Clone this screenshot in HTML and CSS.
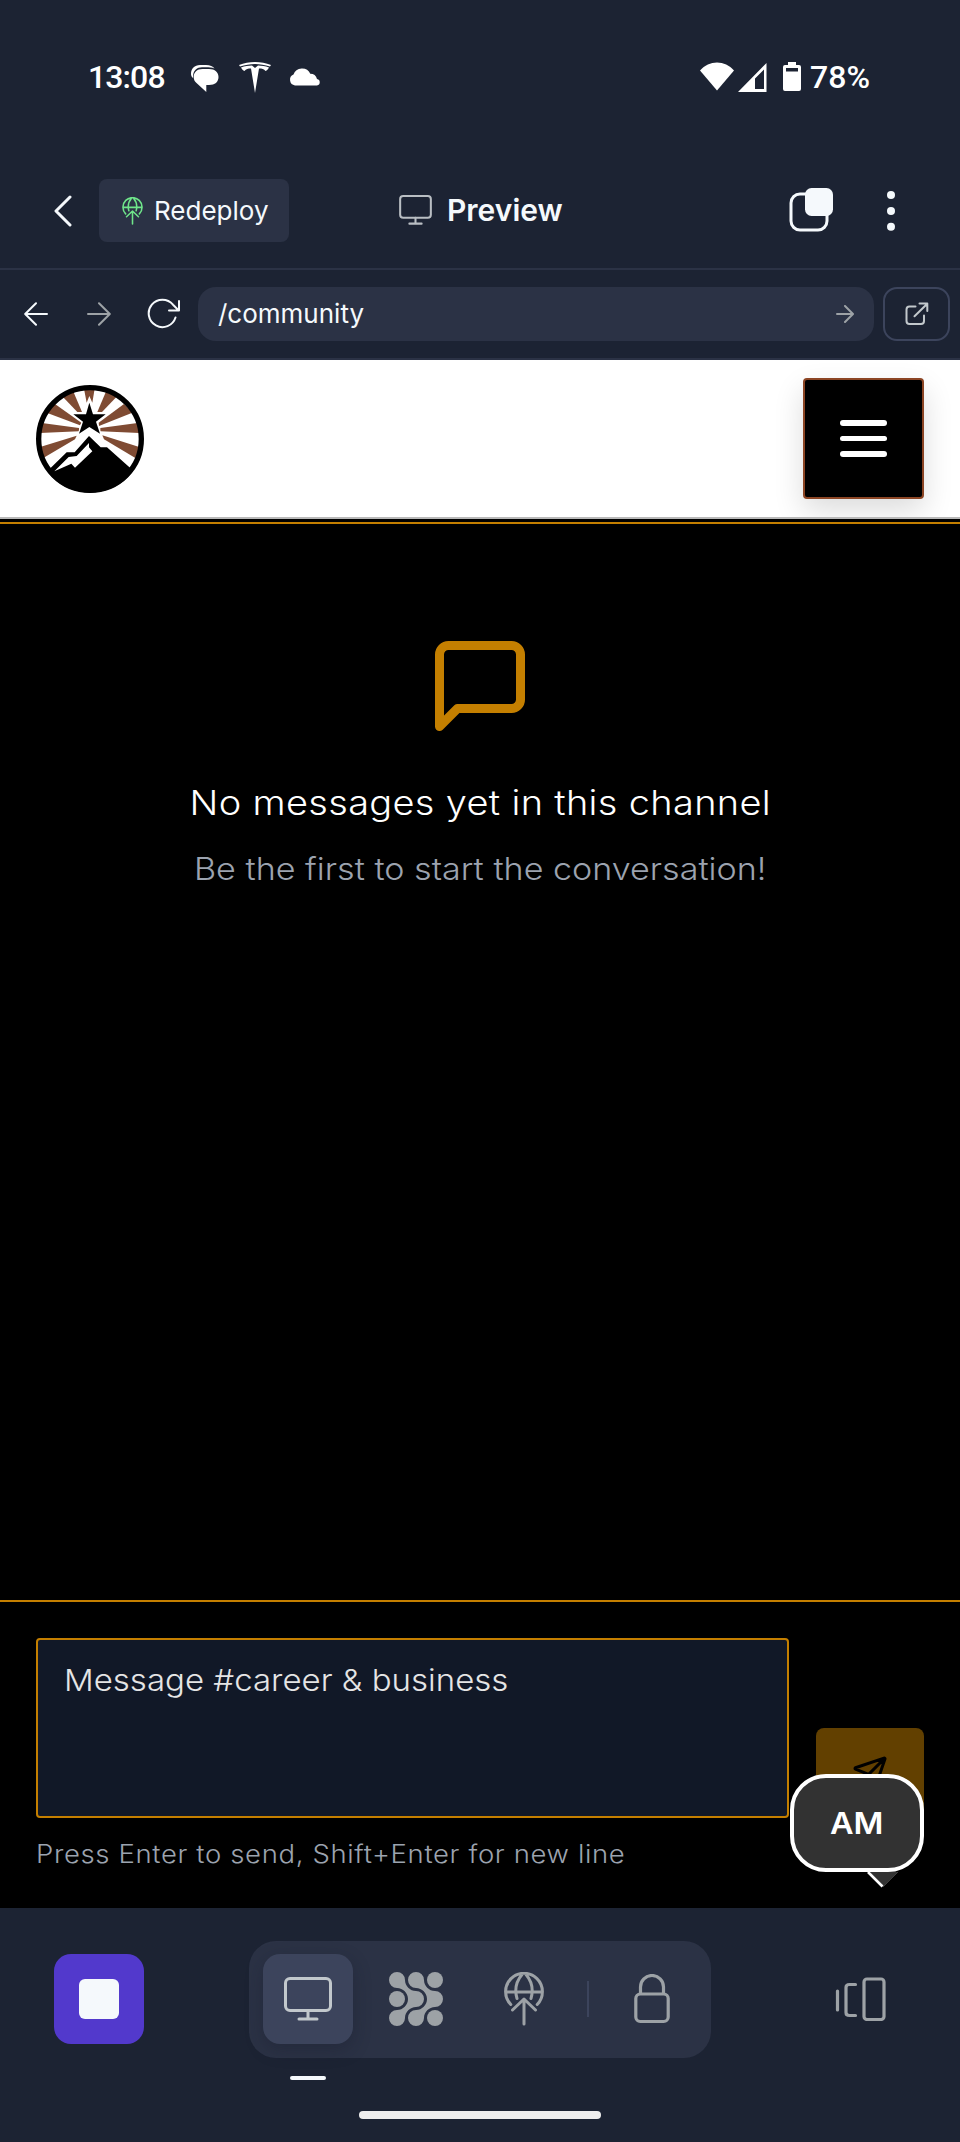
FILE: index.html
```html
<!DOCTYPE html>
<html lang="en">
<head>
<meta charset="utf-8">
<title>Preview</title>
<link rel="stylesheet" href="styles.css">
</head>
<body>
<svg class="defs" width="0" height="0">
  <symbol id="globe-up" viewBox="0 0 40 54">
    <g fill="none" stroke="currentColor" stroke-width="3" stroke-linecap="round" stroke-linejoin="round">
      <path d="M6.8 32.5A18.4 18.4 0 1 1 33.2 32.5M2 20H38M18 2.5C12.5 9 10.500 18 13 26.500M22 2.5C27.500 9 29.500 18 27 26.500M8.500 38L20 27L31.500 38M20 27.500V52"/>
    </g>
  </symbol>
  <symbol id="monitor" viewBox="0 0 48 44">
    <g fill="none" stroke="currentColor" stroke-width="3" stroke-linecap="round">
      <rect x="1.500" y="1.500" width="45" height="32" rx="4.500"/>
      <path d="M24 33.500V42M15 42H33"/>
    </g>
  </symbol>
</svg>
<div class="screen">
  <div class="statusbar">
    <span class="clock">13:08</span>
    <svg class="i-chat" width="28" height="27" viewBox="0 0 28 27"><path fill="#fff" d="M0 9C0 3.500 3.500 0 9 0H15C19 0 22 1.200 23.500 3.500C21 2.500 18 2.300 15 2.300H11C6 2.300 2.500 5.500 2.100 10.500V13C.7 12 0 10.500 0 9Z"/><path fill="#fff" d="M11.500 4H18C24 4 27.500 7.500 27.500 12C27.500 17 24 20 18 20H15.300V27L5.500 18C3.700 16.500 2.700 14.500 2.700 12C2.700 7.500 6 4 11.500 4Z"/></svg>
    <svg class="i-tee" width="32" height="31" viewBox="0 0 32 31"><path fill="#fff" d="M0 3C10-1 22-1 32 3L31 4.500C21 1 11 1 1 4.500ZM2 5.500C6 4 9 3.600 13 3.500L16 6L19 3.500C23 3.600 26 4 30 5.500C29 7.500 28 8.500 26.500 9C25 7 23 6.500 20 6.500L16 31L12 6.500C9 6.500 7 7 5.500 9C4 8.500 3 7.500 2 5.500Z"/></svg>
    <svg class="i-cloud" width="32" height="18" viewBox="0 0 32 18"><path fill="#fff" d="M6 17.500A5.700 5.700 0 0 1 4.500 6.600A9 9 0 0 1 21.300 5.800A7 7 0 0 1 28 11A3.300 3.300 0 0 1 28 17.500Z"/></svg>
    <span class="spacer"></span>
    <svg class="i-wifi" width="34" height="29" viewBox="0 0 34 29"><path fill="#fff" d="M17 28.500L0 8.500C9-2.300 25-2.300 34 8.500Z"/></svg>
    <svg class="i-signal" width="29" height="29" viewBox="0 0 29 29"><path fill="#fff" fill-rule="evenodd" d="M0 29L28.500 0V29ZM17 15.500V26H26V6.500Z"/></svg>
    <svg class="i-battery" width="18" height="29" viewBox="0 0 18 29"><path fill="#fff" fill-rule="evenodd" d="M5 0H13V3H16Q18 3 18 5V27Q18 29 16 29H2Q0 29 0 27V5Q0 3 2 3H5ZM3 6V9.500H15V6Z"/></svg>
    <span class="percent">78%</span>
  </div>

  <div class="toolbar">
    <svg class="i-back" width="18" height="32" viewBox="0 0 18 32"><path fill="none" stroke="#f5f9fc" stroke-width="3" stroke-linecap="round" stroke-linejoin="round" d="M16 2L2 16L16 30"/></svg>
    <div class="redeploy"><svg class="i-globe-small" width="21" height="28"><use href="#globe-up"/></svg><span class="redeploy-label">Redeploy</span></div>
    <svg class="i-monitor-small" width="33" height="30"><use href="#monitor"/></svg>
    <span class="title">Preview</span>
    <svg class="i-tabs" width="46" height="46" viewBox="0 0 46 46"><rect x="2" y="7" width="36" height="36" rx="9" fill="none" stroke="#f5f9fc" stroke-width="3"/><rect x="16" y="1" width="28" height="28" rx="6.500" fill="#f5f9fc"/></svg>
    <svg class="i-more" width="8" height="40" viewBox="0 0 8 40"><g fill="#f5f9fc"><circle cx="4" cy="4" r="4"/><circle cx="4" cy="20" r="4"/><circle cx="4" cy="35.700" r="4"/></g></svg>
  </div>

  <div class="urlbar">
    <svg class="i-prev" width="24" height="24" viewBox="0 0 24 24"><path class="line-bright" d="M23 12H1.500M12 1.200L1.200 12L12 22.800"/></svg>
    <svg class="i-next" width="24" height="24" viewBox="0 0 24 24"><path class="line-dim" d="M1 12H22.500M12 1.200L22.800 12L12 22.800"/></svg>
    <svg class="i-reload" width="34" height="31" viewBox="0 0 34 31"><path class="line-bright" d="M28.500 19.500A13.700 13.700 0 1 1 26 6.700L31.500 12.300M32 3V12.500H22"/></svg>
    <div class="address"><span class="address-text">/community</span><svg class="i-go" width="18" height="18" viewBox="0 0 18 18"><path class="line-dim" d="M1 9H16.500M9 1L17 9L9 17"/></svg></div>
    <div class="open"><svg width="24" height="24" viewBox="0 0 24 24"><path class="line-soft" d="M10.500 4.500H4.500Q1.500 4.500 1.500 7.500V19Q1.500 22 4.500 22H16Q19 22 19 19V13.500M9.500 14.200L22 2M14.500 1.500H22.300V9"/></svg></div>
  </div>

  <div class="site-header">
    <svg class="logo" width="108" height="108" viewBox="108 375 324 324">
      <clipPath id="disc"><circle cx="270" cy="537" r="161"/></clipPath>
      <circle cx="270" cy="537" r="154" fill="#fff"/>
      <g fill="#7f4b33">
        <path d="M252 386H284L277 428L268 408L260 428Z"/>
        <path d="M186 408L218 390L246 456H232Z"/><path d="M352 408L320 390L292 456H306Z"/>
        <path d="M165 432L140 458L240 496L244 488Z"/><path d="M372 432L397 458L297 498L296 488Z"/>
        <path d="M120 488V519L237 514V504Z"/><path d="M418 488V519L301 514V504Z"/>
        <path d="M118 562L130 594L225 538L230 527Z"/><path d="M420 562L406 594L312 538L307 526Z"/>
      </g>
      <circle cx="270" cy="537" r="154" fill="none" stroke="#000" stroke-width="16"/>
      <path fill="#000" stroke="#fff" stroke-width="7" paint-order="stroke" d="M268 428L279 463H317L288 485L300 521L268 501L237 521L249 485L220 463H258Z"/>
      <path clip-path="url(#disc)" fill="#000" d="M148 628L200 577H224L267 528L302 562H321L400 632L432 700H108Z"/>
      <path fill="#fff" d="M163 634L206 591L230 588L267 549V562L277 574L225 623L214 611Z"/>
    </svg>
    <div class="menu"><i></i><i></i><i></i></div>
  </div>

  <div class="channel">
    <svg class="i-message" width="108" height="108" viewBox="0 0 24 24"><path fill="none" stroke="#c47f00" stroke-width="2" stroke-linecap="round" stroke-linejoin="round" d="M21 15a2 2 0 0 1-2 2H7l-4 4V5a2 2 0 0 1 2-2h14a2 2 0 0 1 2 2z"/></svg>
    <div class="empty-title">No messages yet in this channel</div>
    <div class="empty-sub">Be the first to start the conversation!</div>
  </div>

  <div class="composer">
    <div class="composer-row">
      <div class="input"><span class="placeholder">Message #career &amp; business</span></div>
      <div class="send"><svg width="36" height="36" viewBox="0 0 24 24"><path fill="none" stroke="#000" stroke-width="2" stroke-linecap="round" stroke-linejoin="round" d="M14.536 21.686a.5.5 0 0 0 .937-.024l6.500-19a.496.496 0 0 0-.635-.635l-19 6.500a.5.5 0 0 0-.024.937l7.930 3.180a2 2 0 0 1 1.112 1.110zM21.854 2.147l-10.940 10.939"/></svg></div>
    </div>
    <div class="hint"><span class="hint-text">Press Enter to send, Shift+Enter for new line</span></div>
    <div class="bubble"><span class="bubble-text">AM</span>
      <svg class="tail" width="32" height="16" viewBox="0 0 32 16"><path fill="#323232" d="M1 0H31L16 15Z"/><path fill="none" stroke="#fff" stroke-width="2.600" d="M1 0L15.500 14.500"/><path fill="none" stroke="#555" stroke-width=".6" d="M16 15L31 0"/></svg>
    </div>
  </div>

  <div class="dock">
    <div class="stop"><i></i></div>
    <div class="tools">
      <div class="tool active"><svg width="48" height="44"><use href="#monitor"/></svg></div>
      <svg class="i-agents" width="54" height="54" viewBox="0 0 54 54"><g fill="#9da2a6"><path id="blob" d="M16 8C16 14 21 19 27 19A8 8 0 0 1 27 35C21 35 16 40 16 46A8 8 0 1 1 8 38C14 38 19 33 19 27C19 21 14 16 8 16A8 8 0 1 1 16 8Z"/><use href="#blob" x="19"/><circle cx="8" cy="27" r="8"/><circle cx="46" cy="8" r="8"/><circle cx="46" cy="46" r="8"/></g></svg>
      <svg class="i-globe" width="40" height="54"><use href="#globe-up"/></svg>
      <i class="sep"></i>
      <svg class="i-lock" width="36" height="50" viewBox="0 0 36 50"><g fill="none" stroke="#9da2a6" stroke-width="3.200"><rect x="1.800" y="20" width="32.400" height="27.500" rx="4.500"/><path d="M6.500 20V13A11.500 11.500 0 0 1 29.500 13V20"/></g></svg>
      <i class="indicator"></i>
    </div>
    <svg class="i-devices" width="52" height="44" viewBox="0 0 52 44"><g fill="none" stroke="#9da2a6" stroke-width="3.200" stroke-linecap="round"><path d="M2.500 14V33M20.500 7.500H14.500Q11 7.500 11 10.500V35.500Q11 38.500 14.500 38.500H20.500"/><rect x="29" y="2" width="20" height="40.500" rx="3"/></g></svg>
  </div>
  <div class="gesture"><i></i></div>
</div>
</body>
</html>
```

FILE: styles.css
```css
* { box-sizing: border-box; }
body { margin: 0; background: #1c2333; font-family: Inter, "Noto Sans", sans-serif; color: #f5f9fc; }
i { display: block; }
svg { display: block; flex: none; }
span, .empty-title, .empty-sub { white-space: nowrap; }
.defs { position: absolute; }
.screen { width: 960px; height: 2142px; overflow: hidden; display: flex; flex-direction: column; }
.screen > div { flex: none; }

.line-bright, .line-dim, .line-soft { fill: none; stroke: #f5f9fc; stroke-width: 2; stroke-linecap: round; stroke-linejoin: round; }
.line-dim { stroke: #9da2a6; }
.line-soft { stroke: #c2c8cc; }

.statusbar { height: 154px; padding: 57px 91px 0 88px; display: flex; align-items: flex-start; }
.clock, .percent { font: 500 32px/40px Roboto, sans-serif; color: #fff; }
.clock { width: 103px; letter-spacing: -.9px; }
.i-chat { margin-top: 8px; }
.i-tee { margin: 5px 0 0 20px; }
.i-cloud { margin: 11px 0 0 18px; }
.spacer { flex: 1; }
.i-wifi { margin-top: 5px; }
.i-signal { margin: 6px 0 0 4px; }
.i-battery { margin: 5px 9px 0 16px; }
.percent { width: 59px; }

.toolbar { height: 116px; padding: 0 65px 0 54px; border-bottom: 2px solid #2b3245; display: flex; align-items: flex-start; }
.i-back { margin-top: 41px; }
.redeploy { margin: 25px 0 0 27px; width: 190px; height: 63px; padding-left: 23px; border-radius: 8px; background: #2b3245; display: flex; align-items: center; }
.i-globe-small { color: #6fe58a; }
.redeploy-label { margin-left: 11px; font-size: 26px; line-height: 40px; }
.i-monitor-small { margin: 41px 0 0 110px; color: #b9bec3; }
.title { margin: 36px 0 0 15px; width: 360px; font-size: 30px; font-weight: 600; line-height: 40px; }
.i-tabs { margin: 33px 52px 0 -18px; }
.i-more { margin-top: 37px; }

.urlbar { height: 90px; padding: 0 10px 1px 24px; border-bottom: 2px solid #2b3245; display: flex; align-items: center; }
.i-next { margin-left: 39px; }
.i-reload { margin-left: 36px; }
.address { margin-left: 17px; width: 676px; height: 54px; border-radius: 18px; background: #2b3245; padding: 0 20px; display: flex; align-items: center; justify-content: space-between; }
.address-text { font-size: 26px; line-height: 40px; }
.open { margin-left: 9px; width: 67px; height: 54px; border: 2px solid #3c445c; border-radius: 14px; display: flex; align-items: center; justify-content: center; }

.site-header { height: 159px; background: #fff; border-bottom: 2px solid #b9b9b9; padding: 18px 36px 0; display: flex; justify-content: space-between; overflow: hidden; }
.logo { margin-top: 7px; }
.menu { width: 121px; height: 121px; border: 2px solid #8c4524; border-radius: 4px; background: #000; box-shadow: 0 12px 30px rgba(0,0,0,.14); display: flex; flex-direction: column; align-items: center; justify-content: center; gap: 10.200px; }
.menu i { width: 47px; height: 5.600px; border-radius: 3px; background: #fff; }

.channel { height: 1081px; background: #000; border-top: 3px solid #000; display: flex; flex-direction: column; align-items: center; }
.channel::before { content: ""; width: 100%; height: 2px; background: #c47f00; flex: none; }
.i-message { margin-top: 108px; }
.empty-title { margin-top: 38px; height: 50px; font-size: 34.500px; font-weight: 300; line-height: 50px; letter-spacing: .3px; color: #fff; transform: scaleX(1.1); }
.empty-sub { margin-top: 19px; height: 44px; font-size: 31px; font-weight: 300; line-height: 44px; color: #9ca3af; transform: scaleX(1.1); }

.composer { position: relative; height: 308px; background: #000; border-top: 2px solid #c47f00; padding: 36px 36px 0; }
.composer-row { display: flex; justify-content: space-between; align-items: flex-end; }
.input { width: 753px; height: 180px; border: 2px solid #c47f00; border-radius: 4px; background: #111827; padding: 18px 26px; }
.placeholder { display: block; font-size: 30px; font-weight: 300; line-height: 44px; color: #e5e5e5; transform: scaleX(1.1); transform-origin: left; }
.send { width: 108px; height: 90px; border-radius: 8px; background: #624000; display: flex; align-items: center; justify-content: center; }
.hint { padding: 18px 0 0 0; }
.hint-text { display: block; font-size: 25px; font-weight: 300; line-height: 36px; letter-spacing: .57px; color: #9ca3af; transform: scaleX(1.1); transform-origin: left; }
.bubble { position: absolute; left: 790px; top: 172px; width: 134px; height: 98px; border: 4px solid #fff; border-radius: 36px; background: #323232; display: flex; align-items: center; justify-content: center; }
.bubble-text { font-size: 30px; font-weight: 600; line-height: 40px; color: #fff; transform: scaleX(1.08); }
.tail { position: absolute; left: 73px; top: 94px; }

.dock { height: 180px; padding: 33px 73px 0 54px; display: flex; align-items: flex-start; }
.stop { margin-top: 13px; width: 90px; height: 90px; border-radius: 17px; background: #5239cc; display: flex; align-items: center; justify-content: center; }
.stop i { width: 40px; height: 40px; border-radius: 6px; background: #f5f9fc; }
.tools { position: relative; margin-left: 105px; width: 462px; height: 117px; border-radius: 27px; background: #2b3245; padding: 0 0 1px 14px; display: flex; align-items: center; color: #9da2a6; }
.active { width: 90px; height: 90px; border-radius: 17px; background: #3c445c; box-shadow: 0 6px 18px rgba(20,22,40,.3); color: #c2c8cc; display: flex; align-items: center; justify-content: center; }
.i-agents { margin-left: 36px; }
.i-globe { margin-left: 61px; }
.sep { margin-left: 43px; width: 2px; height: 36px; background: #3c445c; }
.i-lock { margin-left: 45px; }
.indicator { position: absolute; left: 41px; top: 135px; width: 36px; height: 4px; border-radius: 2px; background: #f5f9fc; }
.i-devices { margin: 36px 0 0 124px; }

.gesture { height: 54px; padding: 23px 0 0 359px; }
.gesture i { width: 242px; height: 8px; border-radius: 4px; background: #eee; }
```
